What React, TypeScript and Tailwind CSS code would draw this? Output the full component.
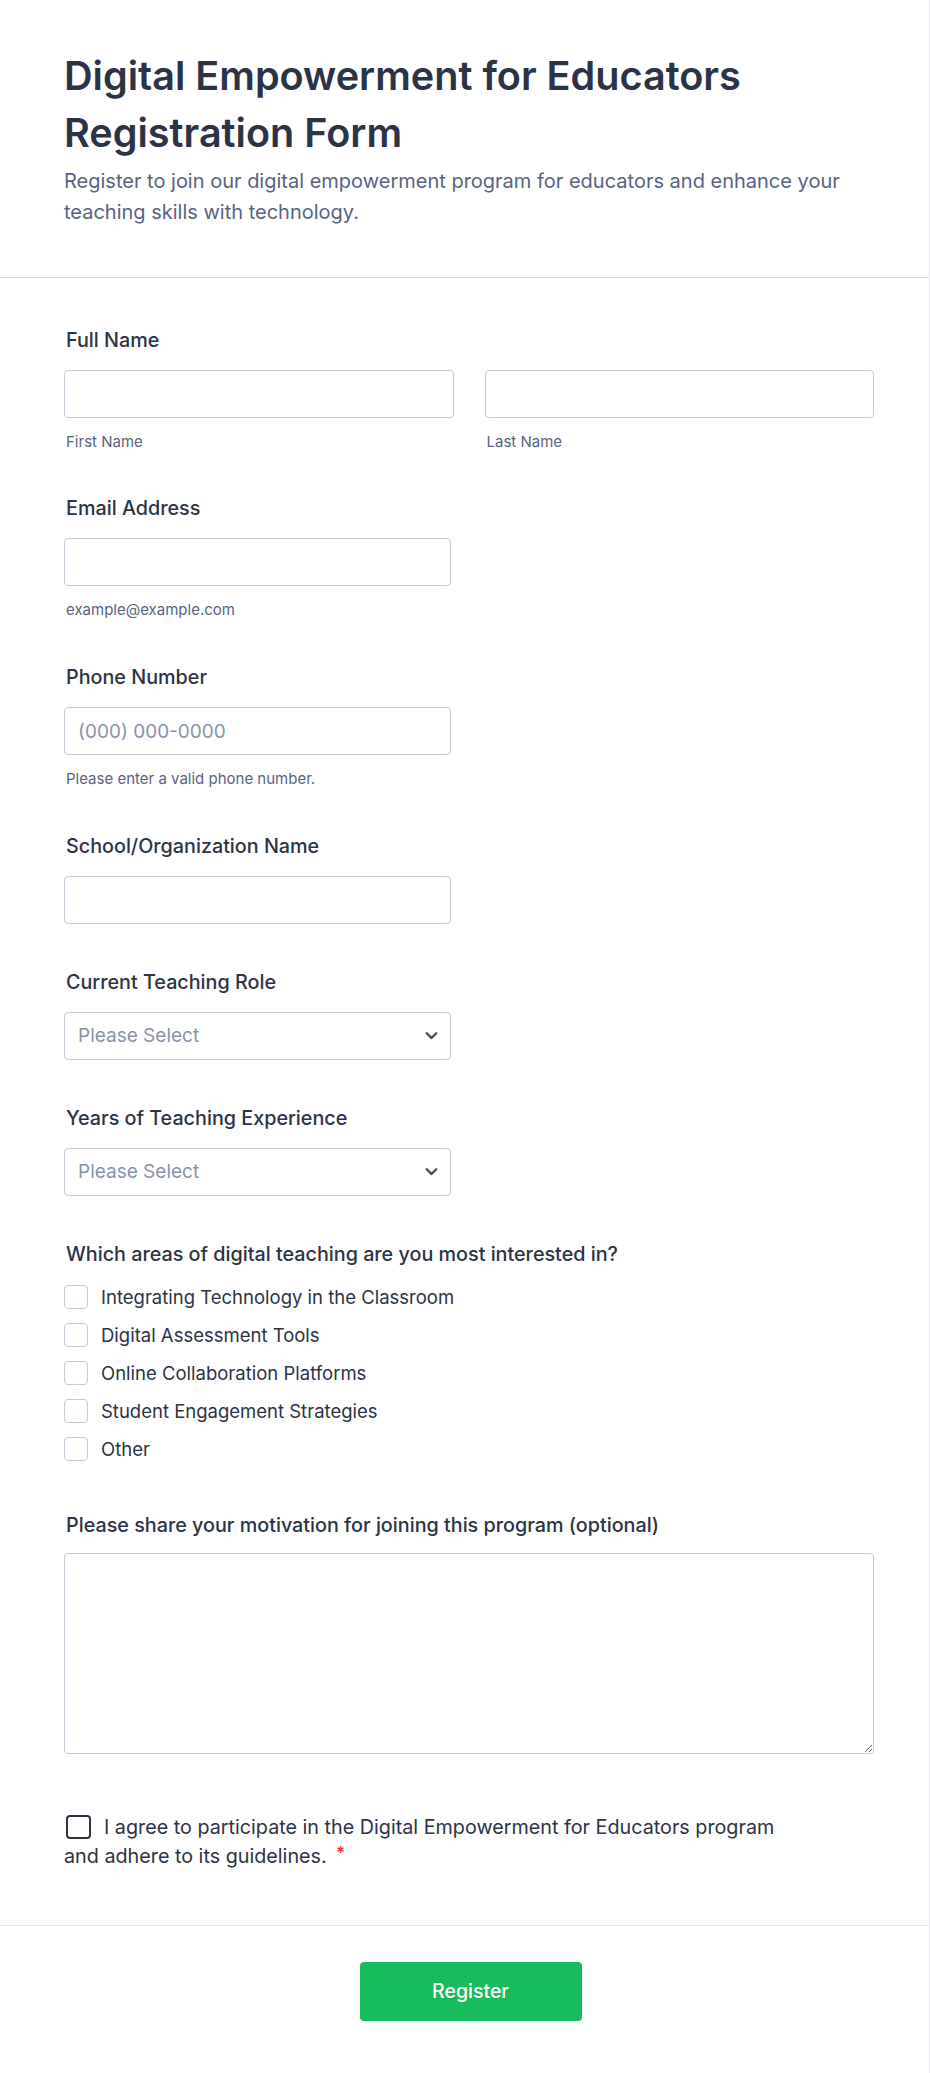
import { useState } from 'react';

const interests = [
  'Integrating Technology in the Classroom',
  'Digital Assessment Tools',
  'Online Collaboration Platforms',
  'Student Engagement Strategies',
  'Other',
];

function Label({ children }: { children: React.ReactNode }) {
  return <label className="block pt-[2px] pl-[2px] text-[19.75px] leading-[27px] font-medium text-[#2c3345]">{children}</label>;
}

function Sublabel({ children }: { children: React.ReactNode }) {
  return <div className="mt-[13px] pl-[2px] text-[15px] leading-[21px] text-[#57647e]">{children}</div>;
}

function TextInput({ placeholder, className = '' }: { placeholder?: string; className?: string }) {
  return (
    <input
      type="text"
      placeholder={placeholder}
      className={`h-[48px] rounded-[4px] border border-[#c3cad8] bg-white px-[13px] text-[19px] text-[#2c3345] placeholder:text-[#8894ab] outline-none ${className}`}
    />
  );
}

function SelectBox() {
  return (
    <div className="relative mt-[16px] w-[387px]">
      <select
        defaultValue=""
        className="h-[48px] w-full appearance-none rounded-[4px] border border-[#c3cad8] bg-white px-[13px] text-[19px] text-[#8894ab] outline-none"
      >
        <option value="" disabled>
          Please Select
        </option>
      </select>
      <svg
        className="pointer-events-none absolute right-[13px] top-1/2 -translate-y-1/2"
        width="13"
        height="9"
        viewBox="0 0 13 9"
        fill="none"
      >
        <path d="M1.75 1.75L6.5 6.5L11.25 1.75" stroke="#3f4a63" strokeWidth="2.4" strokeLinecap="round" strokeLinejoin="round" />
      </svg>
    </div>
  );
}

export default function App() {
  const [checked, setChecked] = useState<Record<string, boolean>>({});
  const [agree, setAgree] = useState(false);

  return (
    <div className="min-h-screen w-full bg-white border-r border-[#e3e5eb]" style={{ fontFamily: 'Inter, "Noto Sans", sans-serif' }}>
      {/* Header */}
      <div className="px-16 pt-[48px] pb-[49px] border-b border-[#d8dae0]">
        <h1 className="text-[39.6px] leading-[57px] font-semibold text-[#2c3345]">
          Digital Empowerment for Educators Registration Form
        </h1>
        <p className="mt-[4px] max-w-[800px] text-[20px] leading-[31px] text-[#57647e]">
          Register to join our digital empowerment program for educators and enhance your teaching skills with technology.
        </p>
      </div>

      {/* Form */}
      <div className="pl-16 pr-[55px] pt-[47px] pb-[56px]">
        {/* Full Name */}
        <div>
          <Label>Full Name</Label>
          <div className="mt-[16px] grid grid-cols-2 gap-[31px]">
            <div>
              <TextInput className="w-full" />
              <Sublabel>First Name</Sublabel>
            </div>
            <div>
              <TextInput className="w-full" />
              <Sublabel>Last Name</Sublabel>
            </div>
          </div>
        </div>

        {/* Email */}
        <div className="mt-[41px]">
          <Label>Email Address</Label>
          <TextInput className="mt-[16px] w-[387px]" />
          <Sublabel>example@example.com</Sublabel>
        </div>

        {/* Phone */}
        <div className="mt-[42px]">
          <Label>Phone Number</Label>
          <TextInput className="mt-[16px] w-[387px]" placeholder="(000) 000-0000" />
          <Sublabel>Please enter a valid phone number.</Sublabel>
        </div>

        {/* School */}
        <div className="mt-[42px]">
          <Label>School/Organization Name</Label>
          <TextInput className="mt-[16px] w-[387px]" />
        </div>

        {/* Role */}
        <div className="mt-[43px]">
          <Label>Current Teaching Role</Label>
          <SelectBox />
        </div>

        {/* Experience */}
        <div className="mt-[43px]">
          <Label>Years of Teaching Experience</Label>
          <SelectBox />
        </div>

        {/* Interests */}
        <div className="mt-[43px]">
          <Label>Which areas of digital teaching are you most interested in?</Label>
          <div className="mt-[17px] flex flex-col gap-[14px]">
            {interests.map((item) => (
              <label key={item} className="flex h-6 cursor-pointer items-center gap-[13px]">
                <span
                  onClick={() => setChecked({ ...checked, [item]: !checked[item] })}
                  className={`h-6 w-6 shrink-0 rounded-[4px] border ${checked[item] ? 'border-[#18bd5b] bg-[#18bd5b]' : 'border-[#c3cad8] bg-white'}`}
                />
                <span className="text-[18.5px] leading-6 text-[#2c3345]">{item}</span>
              </label>
            ))}
          </div>
        </div>

        {/* Motivation */}
        <div className="mt-[49px]">
          <Label>Please share your motivation for joining this program (optional)</Label>
          <textarea className="mt-[14px] block h-[201px] w-full rounded-[4px] border border-[#c3cad8] bg-white p-[13px] text-[18px] text-[#2c3345] outline-none" />
        </div>

        {/* Agreement */}
        <div className="mt-[61px] w-[735px] text-[19.75px] leading-[25.5px] text-[#2c3345]">
          <span
            onClick={() => setAgree(!agree)}
            className={`ml-[2px] mr-[13px] inline-block h-6 w-[25px] cursor-pointer rounded-[4px] border-2 align-[-5px] ${agree ? 'border-[#18bd5b] bg-[#18bd5b]' : 'border-[#2c3345] bg-white'}`}
          />
          I agree to participate in the Digital Empowerment for Educators program and adhere to its guidelines.
          <span className="ml-[9px] align-[4px] text-[17px] font-bold text-[#f23a3c]">*</span>
        </div>
      </div>

      {/* Submit */}
      <div className="flex justify-center border-t border-[#e6e7eb] pt-[36px] pb-[50px] pl-[12px]">
        <button className="h-[59px] w-[222px] rounded-[4px] bg-[#18bd5b] text-[19.5px] font-medium text-white">
          Register
        </button>
      </div>
    </div>
  );
}
